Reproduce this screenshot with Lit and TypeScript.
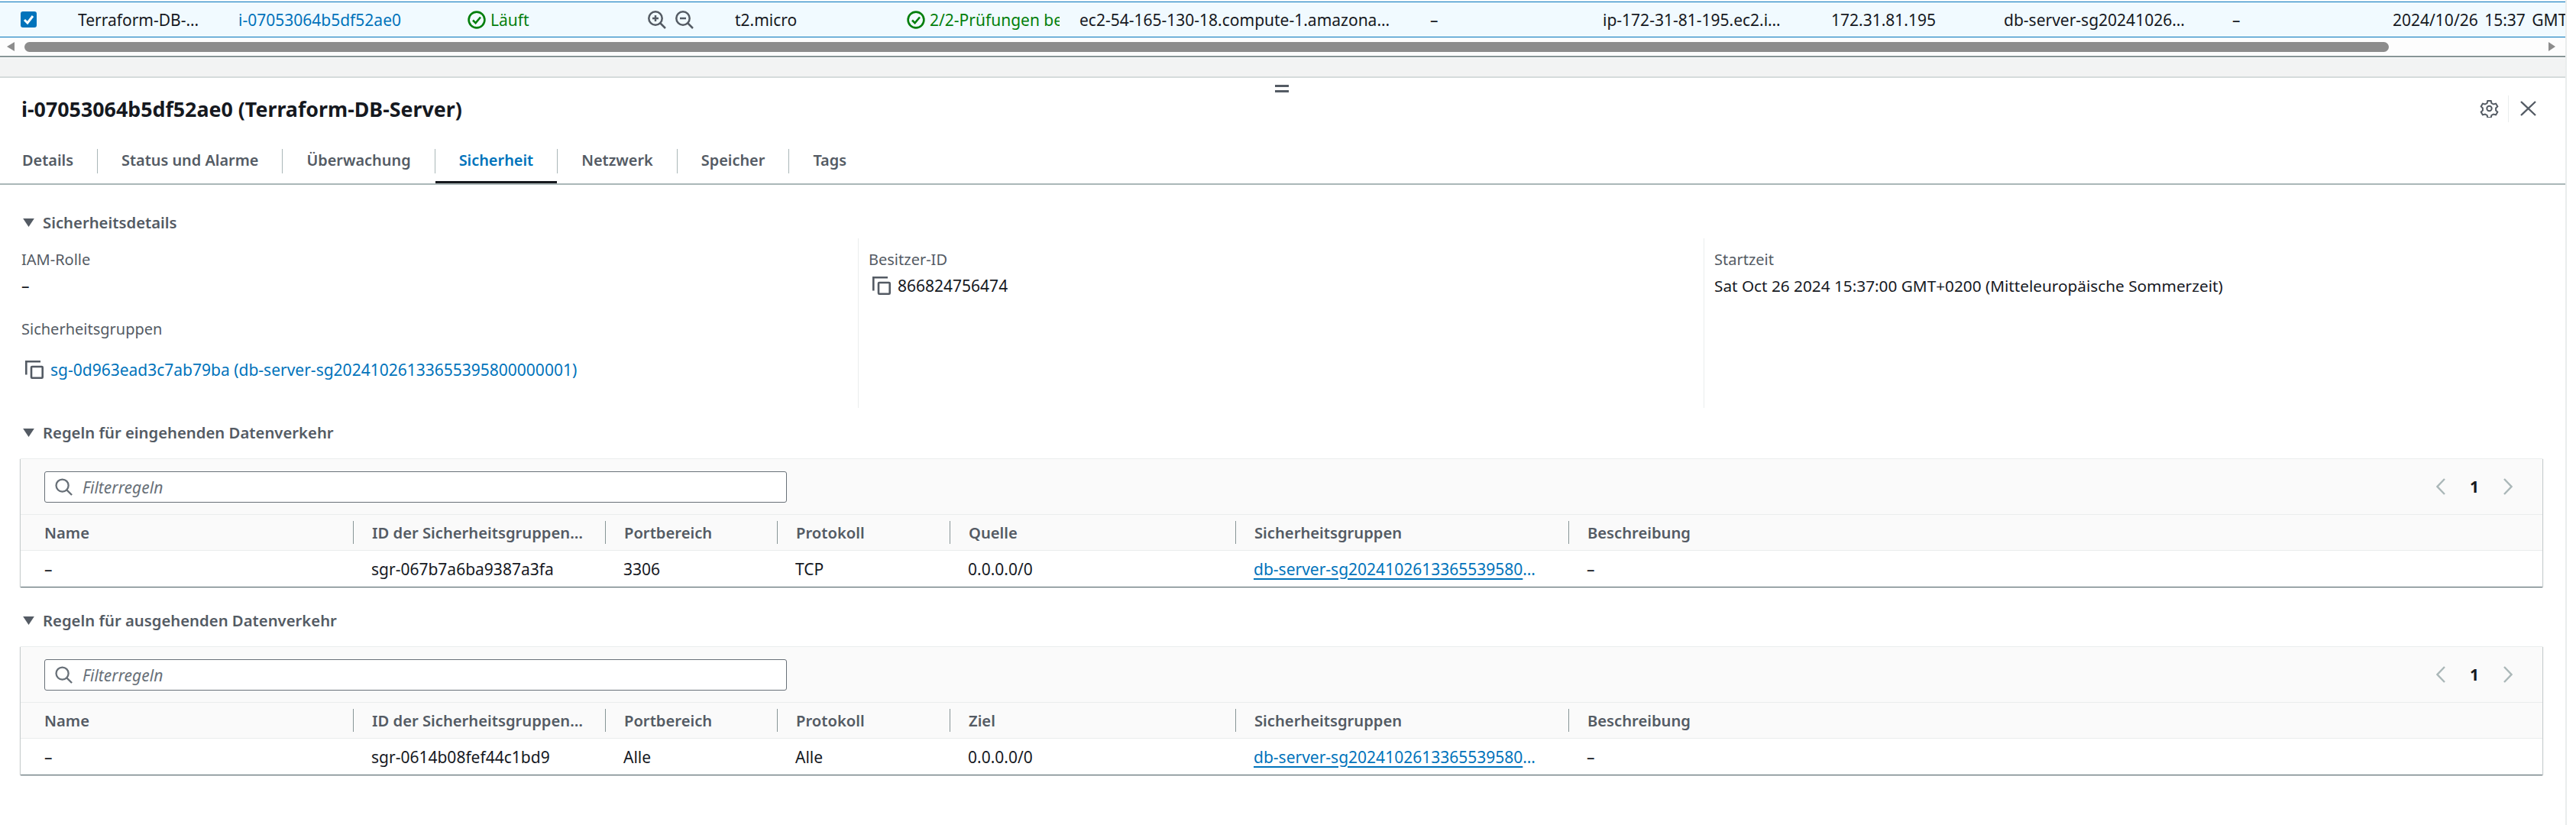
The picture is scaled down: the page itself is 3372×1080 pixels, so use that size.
import { LitElement, html, css, svg } from "lit";
import { customElement } from "lit/decorators.js";

const checkCircle = html`<svg class="status-icon" viewBox="0 0 24 24" fill="none" stroke="#037f0c" stroke-width="2.6"><circle cx="12" cy="12" r="10.4"/><path d="M7 12.5l3.6 3.6L17 8.5"/></svg>`;
const copyIcon = html`<svg class="copy" viewBox="0 0 24 24" fill="none" stroke="#545b64" stroke-width="2.6"><path d="M1.3 18.5V1.3H20"/><rect x="8" y="8" width="14.7" height="14.7" rx="1"/></svg>`;
const caret = html`<svg class="caret" viewBox="0 0 16 12"><path d="M0 0h16L8 12z" fill="#545b64"/></svg>`;
const search = html`<svg class="search" viewBox="0 0 24 24" fill="none" stroke="#687078" stroke-width="2.4"><circle cx="10" cy="10" r="8.4"/><path d="M16 16l7 7"/></svg>`;

const zoomGlyph = (plus: boolean) => svg`<circle cx="10" cy="10" r="8.7"/><path d="M16.5 16.5l6.5 6.5M6 10h8${plus ? "M10 6v8" : ""}"/>`;

interface Rule {
  id: string;
  port: string;
  proto: string;
  peer: string;
}

@customElement("app-root")
export class AppRoot extends LitElement {
  static styles = css`
    :host {
      display: block;
      width: 3372px;
      height: 1080px;
      overflow: hidden;
      background: #fff;
      font-family: "Noto Sans", sans-serif;
      font-size: 21px;
      color: #16191f;
    }
    a { color: #0073bb; text-decoration: none; }
    .page { width: 3360px; height: 1080px; box-sizing: border-box; overflow: hidden; border-right: 2px solid #eaeded; }
    .row {
      display: grid;
      grid-template-columns: 102px 210px 300px 236px 114px 225px 226px 459px 226px 299px 226px 299px 210px 226px;
      align-items: center;
      height: 45px;
      margin-top: 2px;
      background: #f1faff;
      border-top: 1px solid #0073bb;
      border-bottom: 1px solid #0073bb;
      white-space: nowrap;
    }
    .row > * { overflow: hidden; }
    .date { word-spacing: 3px; }
    .checkbox { width: 21px; height: 21px; margin-left: 27px; background: #0073bb; border-radius: 3px; }
    .checkbox svg { display: block; }
    .green { color: #037f0c; display: flex; align-items: center; gap: 6px; }
    .green .clip { width: 170px; overflow: hidden; }
    .status-icon { width: 24px; height: 24px; flex: none; }
    .zoom { display: flex; gap: 12px; }
    .zoom svg { width: 24px; height: 24px; fill: none; stroke: #545b64; stroke-width: 2.5; }
    .scrollbar { display: flex; align-items: center; height: 24px; background: #fdfdfd; padding: 0 13px 0 9px; border-bottom: 2px solid #879596; }
    .arrow-l { border-right: 10px solid #8c8c8c; border-top: 6px solid transparent; border-bottom: 6px solid transparent; }
    .arrow-r { border-left: 9px solid #8c8c8c; border-top: 6px solid transparent; border-bottom: 6px solid transparent; margin-left: auto; }
    .thumb { width: 3095px; height: 13px; margin-left: 13px; border-radius: 7px; background: #8c8c8c; }
    .band { height: 24px; background: #f2f3f3; border-bottom: 2px solid #d5dbdb; margin-top: 1px; }
    .handle { display: flex; flex-direction: column; gap: 4px; align-items: center; padding: 9px 2px 0 0; height: 10px; }
    .handle i { display: block; width: 18px; height: 3px; background: #545b64; }
    .head { display: flex; align-items: center; height: 50px; padding: 0 37px 0 28px; margin-top: -4px; }
    h1 { margin: 0; font-size: 26.8px; font-weight: 700; flex: 1; }
    .gear { width: 25px; height: 24px; }
    .head-sep { width: 1px; height: 35px; background: #eaeded; margin: 0 14px 0 12px; }
    .close { width: 23px; height: 20px; }
    .tabs { display: flex; height: 51px; margin-top: 22px; border-bottom: 2px solid #aab7b8; align-items: flex-start; }
    .tab { height: 32px; line-height: 30px; margin-top: 6px; padding: 0 31px; border-left: 1px solid #aab7b8; font-weight: 600; color: #545b64; font-size: 19.9px; position: relative; }
    .tab:first-child { border-left: 0; padding-left: 29px; }
    .tab.active { color: #0073bb; }
    .tab.active::after { content: ""; position: absolute; left: 0; right: 0; bottom: -13px; height: 3px; background: #16191f; }
    .section { display: flex; align-items: center; gap: 11px; padding-left: 30px; font-weight: 600; color: #545b64; font-size: 20.3px; line-height: 26px; }
    .caret { width: 15px; height: 11px; }
    .details { margin-top: 36px; }
    .cols { display: grid; grid-template-columns: 1095px 1107px 1fr; margin-top: 8px; height: 222px; padding-left: 28px; }
    .col { padding-top: 15px; }
    .col + .col { border-left: 1px solid #eaeded; padding-left: 13px; }
    .label { color: #545b64; line-height: 26px; font-size: 20px; }
    .value { line-height: 26px; margin-top: 8px; display: flex; align-items: center; gap: 9px; }
    .start { font-size: 20.75px; }
    .copy { width: 24px; height: 24px; margin-left: 5px; flex: none; }
    .sg { margin-top: 31px; }
    .sg-link { margin-top: 27px; }
    .rules { margin-top: 19px; }
    .rules + .rules { margin-top: 31px; }
    .table { margin: 21px 30px 0 27px; border-top: 1px solid #eaeded; background: #fafafa; box-shadow: 0 1px 1px 0 rgba(0, 28, 36, 0.5), 1px 1px 1px 0 rgba(0, 28, 36, 0.15), -1px 1px 1px 0 rgba(0, 28, 36, 0.15); }
    .toolbar { display: flex; align-items: center; height: 72px; padding: 0 39px 0 31px; border-bottom: 1px solid #eaeded; }
    .filter { display: flex; align-items: center; gap: 13px; box-sizing: border-box; width: 972px; height: 41px; padding-left: 13px; background: #fff; border: 1px solid #687078; border-radius: 3px; margin-top: 1px; }
    .search { width: 23px; height: 23px; }
    .filter span { font-style: italic; color: #687078; }
    .pager { margin-left: auto; display: flex; align-items: center; gap: 32px; font-weight: 700; }
    .pager svg { width: 12px; height: 22px; fill: none; stroke: #aab7b8; stroke-width: 2.4; }
    .cells { display: grid; grid-template-columns: 435px 330px 225px 226px 374px 436px 1fr; align-items: center; }
    .cells.th { height: 46px; border-bottom: 1px solid #eaeded; font-weight: 600; color: #545b64; font-size: 20.2px; }
    .cells.td { height: 47px; background: #fff; }
    .cells > div { padding-left: 24px; white-space: nowrap; line-height: 30px; }
    .cells > div:first-child { padding-left: 31px; }
    .cells.th > div + div { border-left: 1px solid #879596; }
    .cells a { text-decoration: underline; text-decoration-thickness: 2px; text-underline-offset: 4px; }
    .cells .ell { display: block; overflow: hidden; text-overflow: ellipsis; width: 375px; }
  `;

  private renderRules(title: string, peerLabel: string, r: Rule) {
    return html`
      <div class="rules">
        <div class="section">${caret}${title}</div>
        <div class="table">
          <div class="toolbar">
            <div class="filter">${search}<span>Filterregeln</span></div>
            <div class="pager">
              <svg viewBox="0 0 12 22"><path d="M11 1L1.5 11L11 21"/></svg>
              <span>1</span>
              <svg viewBox="0 0 12 22"><path d="M1 1L10.5 11L1 21"/></svg>
            </div>
          </div>
          <div class="cells th">
            <div>Name</div><div>ID der Sicherheitsgruppen…</div><div>Portbereich</div><div>Protokoll</div>
            <div>${peerLabel}</div><div>Sicherheitsgruppen</div><div>Beschreibung</div>
          </div>
          <div class="cells td">
            <div>–</div><div>${r.id}</div><div>${r.port}</div><div>${r.proto}</div><div>${r.peer}</div>
            <div><a class="ell" href="#">db-server-sg20241026133655395800000001</a></div><div>–</div>
          </div>
        </div>
      </div>
    `;
  }

  render() {
    return html`
      <div class="page">
        <div class="row">
          <div class="checkbox"><svg viewBox="0 0 21 21" width="21" height="21" fill="none" stroke="#fff" stroke-width="3"><path d="M5 11l4 4 7-9"/></svg></div>
          <div>Terraform-DB-…</div>
          <div><a href="#">i-07053064b5df52ae0</a></div>
          <div class="green">${checkCircle}<span>Läuft</span></div>
          <div class="zoom">
            <svg viewBox="0 0 24 24">${zoomGlyph(true)}</svg>
            <svg viewBox="0 0 24 24">${zoomGlyph(false)}</svg>
          </div>
          <div>t2.micro</div>
          <div class="green">${checkCircle}<span class="clip">2/2-Prüfungen bestanden</span></div>
          <div>ec2-54-165-130-18.compute-1.amazona…</div>
          <div>–</div>
          <div>ip-172-31-81-195.ec2.i…</div>
          <div>172.31.81.195</div>
          <div>db-server-sg20241026…</div>
          <div>–</div>
          <div class="date">2024/10/26 15:37 GMT+2</div>
        </div>
        <div class="scrollbar"><span class="arrow-l"></span><span class="thumb"></span><span class="arrow-r"></span></div>
        <div class="band"></div>
        <div class="handle"><i></i><i></i></div>
        <div class="head">
          <h1>i-07053064b5df52ae0 (Terraform-DB-Server)</h1>
          <svg class="gear" viewBox="0 0 24 24" fill="none" stroke="#545b64" stroke-width="2"><circle cx="12" cy="12" r="3.2"/><path d="M9.8 2h4.4l.7 3 2.7 1.5 3-.9 2.2 3.8-2.2 2.1v3l2.2 2.1-2.2 3.8-3-.9-2.7 1.5-.7 3H9.8l-.7-3-2.7-1.5-3 .9L1.2 16.6l2.2-2.1v-3L1.2 9.4l2.2-3.8 3 .9 2.7-1.5z"/></svg>
          <span class="head-sep"></span>
          <svg class="close" viewBox="0 0 23 20" fill="none" stroke="#545b64" stroke-width="2.4"><path d="M2 1l19 18M21 1L2 19"/></svg>
        </div>
        <div class="tabs">
          <div class="tab">Details</div>
          <div class="tab">Status und Alarme</div>
          <div class="tab">Überwachung</div>
          <div class="tab active">Sicherheit</div>
          <div class="tab">Netzwerk</div>
          <div class="tab">Speicher</div>
          <div class="tab">Tags</div>
        </div>
        <div class="section details">${caret}Sicherheitsdetails</div>
        <div class="cols">
          <div class="col">
            <div class="label">IAM-Rolle</div>
            <div class="value">–</div>
            <div class="label sg">Sicherheitsgruppen</div>
            <div class="value sg-link">${copyIcon}<a href="#">sg-0d963ead3c7ab79ba (db-server-sg20241026133655395800000001)</a></div>
          </div>
          <div class="col">
            <div class="label">Besitzer-ID</div>
            <div class="value">${copyIcon}866824756474</div>
          </div>
          <div class="col">
            <div class="label">Startzeit</div>
            <div class="value start">Sat Oct 26 2024 15:37:00 GMT+0200 (Mitteleuropäische Sommerzeit)</div>
          </div>
        </div>
        ${this.renderRules("Regeln für eingehenden Datenverkehr", "Quelle", { id: "sgr-067b7a6ba9387a3fa", port: "3306", proto: "TCP", peer: "0.0.0.0/0" })}
        ${this.renderRules("Regeln für ausgehenden Datenverkehr", "Ziel", { id: "sgr-0614b08fef44c1bd9", port: "Alle", proto: "Alle", peer: "0.0.0.0/0" })}
      </div>
    `;
  }
}
